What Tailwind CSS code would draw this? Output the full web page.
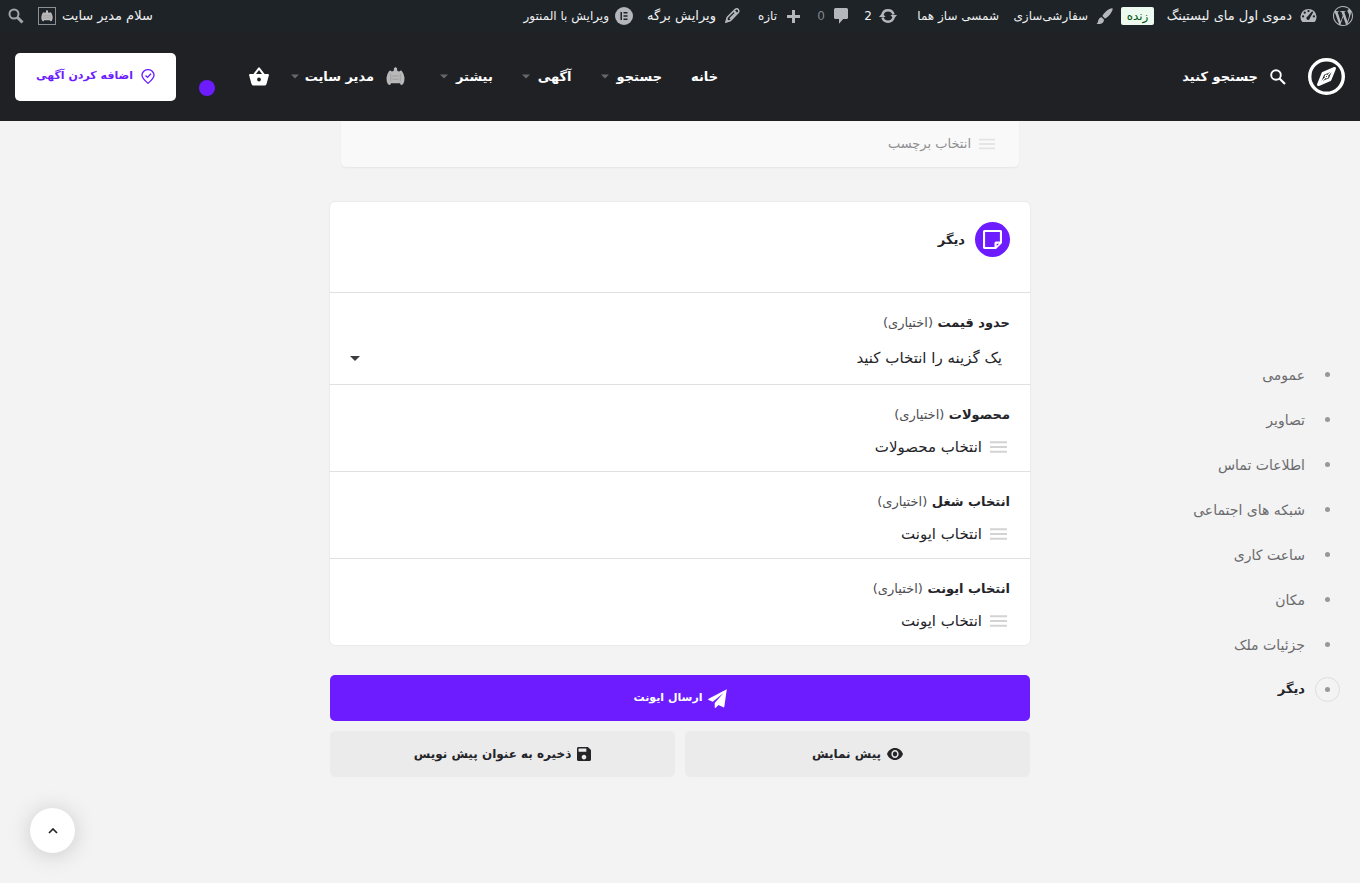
<!DOCTYPE html>
<html lang="fa" dir="rtl">
<head>
<meta charset="utf-8">
<meta name="viewport" content="width=device-width, initial-scale=1">
<title>افزودن آگهی</title>
<script src="https://cdn.jsdelivr.net/npm/@tailwindcss/browser@4"></script>
</head>
<body class="min-h-screen bg-[#f3f3f3] font-['DejaVu_Sans',sans-serif] text-[15px] text-[#242429]">

<svg class="hidden">
  <symbol id="avatar" viewBox="0 0 18 18"><path d="M9 0l1.500 1.200.200 2.500 2 .500.800-1 1.500.600 1.500 2.700 1 3.500-.200 3.500-1 2.500-1.500 1-1-.200-.400-1.300H4.600l-.400 1.300-1 .200-1.500-1-1-2.500-.200-3.500 1-3.500L3 3.800l1.500-.600.800 1 2-.500.200-2.500z" fill="#b9b9b9"/><path d="M4.500 6.500v7M13.500 6.500v7M6 8.500h6M6 11.500h6" stroke="#8c8c8c" stroke-width=".6" fill="none"/></symbol>
  <symbol id="bars" viewBox="0 0 18 12"><path d="M0 1h18M0 6h18M0 11h18" stroke="currentColor" stroke-width="2"/></symbol>
  <symbol id="caret" viewBox="0 0 10 5"><path d="M0 0h10L5 5z" fill="currentColor"/></symbol>
</svg>

<header>
  <div class="flex h-8 items-center justify-between bg-[#1d2327] pr-[7px] pl-2 text-xs whitespace-nowrap text-[#f0f0f1]">
    <nav class="flex items-center" aria-label="نوار مدیریت">
      <a href="#" aria-label="وردپرس" class="ml-4 text-[#b4b8bc]"><svg class="size-5" viewBox="0 0 24 24" fill="currentColor"><path d="M21.469 6.825c.84 1.537 1.318 3.3 1.318 5.175 0 3.979-2.156 7.456-5.363 9.325l3.295-9.527c.615-1.54.82-2.771.82-3.864 0-.405-.026-.78-.07-1.11m-7.981.105c.647-.03 1.232-.105 1.232-.105.582-.075.514-.93-.067-.899 0 0-1.755.135-2.88.135-1.064 0-2.85-.15-2.85-.15-.585-.03-.661.855-.075.885 0 0 .54.061 1.125.09l1.68 4.605-2.37 7.08L5.354 6.9c.649-.03 1.234-.1 1.234-.1.585-.075.516-.93-.065-.896 0 0-1.746.138-2.874.138-.2 0-.438-.008-.69-.015C4.911 3.15 8.235 1.215 12 1.215c2.809 0 5.365 1.072 7.286 2.833-.046-.003-.091-.009-.141-.009-1.06 0-1.812.923-1.812 1.914 0 .89.513 1.643 1.06 2.531.411.72.89 1.643.89 2.977 0 .915-.354 1.994-.821 3.479l-1.075 3.585-3.9-11.61.001.014zM12 22.784c-1.059 0-2.081-.153-3.048-.437l3.237-9.406 3.315 9.087c.024.053.05.101.078.149-1.12.393-2.325.609-3.582.609M1.211 12c0-1.564.336-3.05.935-4.39L7.29 21.709C3.694 19.96 1.212 16.271 1.211 12M12 0C5.385 0 0 5.385 0 12s5.385 12 12 12 12-5.385 12-12S18.615 0 12 0"/></svg></a>
      <a href="#" class="ml-2 flex items-center gap-2"><svg class="size-[17px]" viewBox="0 0 18 18"><path d="M2.500 16A8.500 8.500 0 1 1 15.500 16z" fill="#b4b8bc"/><g fill="#1d2327"><circle cx="9" cy="4.300" r="1.200"/><circle cx="5" cy="6" r="1.200"/><circle cx="3.300" cy="10" r="1.200"/><circle cx="14.700" cy="10" r="1.200"/><path d="M12.800 4.500l1.200 1-3.500 6.200a1.900 1.900 0 1 1-2.500-1.700z"/></g></svg><span class="w-[130px] text-[13px]">دموی اول مای لیستینگ</span></a>
      <span class="ml-2 flex h-[18px] w-[33px] items-center justify-center rounded-[2px] bg-[#edfaef] text-[#00550f]">زنده</span>
      <a href="#" class="ml-[14px] flex items-center gap-2"><svg class="size-[17px]" viewBox="0 0 18 18" fill="#b4b8bc"><path d="M17.500.500c.800.800-1.500 5.500-4.500 8.300-1.200 1.200-2.600 2.200-3.600 2.400L6.800 8.600c.300-1.200 1.500-2.800 2.900-4.200C12.500 1.800 16.700-.200 17.500.500zM6 9.700l2.400 2.500c.200 1.600-.800 3.300-2.600 4.200-1.600.800-3.800.800-5.300.300 1.300-.600 1.500-1.700 1.800-3.200.4-2 1.800-3.700 3.700-3.800z"/></svg><span class="w-[75px]">سفارشی‌سازی</span></a>
      <a href="#" class="ml-4 w-[86px]">شمسی ساز هما</a>
      <a href="#" class="ml-4 flex items-center gap-[7px]"><svg class="h-4 w-[18px]" viewBox="0 0 18 16"><path d="M3.500 6.500A5.700 5.700 0 0 1 14.500 6.500M14.500 9.500A5.700 5.700 0 0 1 3.500 9.500" fill="none" stroke="#b4b8bc" stroke-width="2.600"/><path d="M0 9L3.300 5 6.600 9zM11.400 7L14.700 11 18 7z" fill="#b4b8bc"/></svg><span class="w-2">2</span></a>
      <a href="#" class="ml-[17px] flex items-center gap-[9px]"><svg class="h-4 w-[14px]" viewBox="0 0 14 16" fill="#b4b8bc"><path d="M1.500 0h11A1.500 1.500 0 0 1 14 1.500v8a1.500 1.500 0 0 1-1.500 1.500H9.200L5 15.800V11H1.500A1.500 1.500 0 0 1 0 9.500v-8A1.500 1.500 0 0 1 1.500 0z"/></svg><span class="w-2 text-[#81858a]">0</span></a>
      <a href="#" class="ml-[17px] flex items-center gap-[10px]"><svg class="size-[13px]" viewBox="0 0 13 13"><path d="M6.500 0v13M0 6.500h13" stroke="#b4b8bc" stroke-width="3"/></svg><span class="w-5">تازه</span></a>
      <a href="#" class="ml-[14px] flex items-center gap-[9px]"><svg class="size-[15px]" viewBox="0 0 15 15"><path d="M1 14l1.200-4.500L10.500 1.200q1.600-1 2.700.300t.3 2.700L5.500 12.500z" fill="none" stroke="#b4b8bc" stroke-width="1.500"/><path d="M9 3l3 3M11 5L5 11" stroke="#b4b8bc" stroke-width="2"/><path d="M.3 14.700l1.300-4.200 3 3z" fill="#b4b8bc"/></svg><span class="w-[69px] text-[13px]">ویرایش برگه</span></a>
      <a href="#" class="flex items-center gap-[6px]"><svg class="size-[18px]" viewBox="0 0 18 18"><circle cx="9" cy="9" r="9" fill="#b4b8bc"/><path d="M6.200 5v8M8.500 5.800h4M8.500 9h4M8.500 12.200h4" stroke="#1d2327" stroke-width="1.500"/></svg><span>ویرایش با المنتور</span></a>
    </nav>
    <div class="flex items-center">
      <a href="#" class="ml-[14px] flex items-center gap-[6px]"><span class="text-[13px]">سلام مدیر سایت</span><span class="flex size-[18px] items-center justify-center border border-[#8c8f94]"><svg class="size-3"><use href="#avatar"/></svg></span></a>
      <button type="button" aria-label="جستجو"><svg class="block size-4" viewBox="0 0 16 16" fill="none" stroke="#a0a5aa"><circle cx="6" cy="6" r="4.500" stroke-width="2"/><path d="M9.500 9.500l5 5" stroke-width="3"/></svg></button>
    </div>
  </div>

  <div class="flex h-[89px] items-center justify-between bg-[#202125] px-[15px] text-[13px] font-bold whitespace-nowrap text-white">
    <div class="flex items-center">
      <a href="#" aria-label="خانه" class="ml-[22px]"><svg class="size-[37px]" viewBox="0 0 37 37" fill="none" stroke="#fff"><circle cx="18.500" cy="18.500" r="16.800" stroke-width="3.400"/><path d="M26.500 10.500L15 15.500 10.500 26.500 22 21.500z" stroke-width="3" stroke-linejoin="round"/><circle cx="18.500" cy="18.500" r="1.300" stroke-width="1.400"/><path d="M26.500 10.500l-6.500 6.500M10.500 26.500l6.500-6.500" stroke-width="1.200"/></svg></a>
      <button type="button" class="flex items-center gap-3 font-bold"><svg class="size-4" viewBox="0 0 16 16" fill="none" stroke="#fff"><circle cx="6" cy="6" r="4.800" stroke-width="1.900"/><path d="M9.500 9.500l5.500 5.500" stroke-width="2.200"/></svg><span>جستجو کنید</span></button>
    </div>
    <div class="flex items-center">
      <nav class="ml-[35px] flex items-center gap-[29px]" aria-label="منوی اصلی">
        <a href="#">خانه</a>
        <a href="#" class="flex items-center gap-2"><span>جستجو</span><svg class="h-[5px] w-2 text-[#68686c]"><use href="#caret"/></svg></a>
        <a href="#" class="flex items-center gap-2"><span>آگهی</span><svg class="h-[5px] w-2 text-[#68686c]"><use href="#caret"/></svg></a>
        <a href="#" class="flex items-center gap-2"><span>بیشتر</span><svg class="h-[5px] w-2 text-[#68686c]"><use href="#caret"/></svg></a>
      </nav>
      <a href="#" class="ml-[22px] flex items-center gap-2"><svg class="ml-1 size-[19px]"><use href="#avatar"/></svg><span class="w-[67px]">مدیر سایت</span><svg class="h-[5px] w-2 text-[#68686c]"><use href="#caret"/></svg></a>
      <a href="#" aria-label="سبد خرید" class="relative ml-[73px]"><svg class="h-[19px] w-5" viewBox="0 0 20 19" fill="#fff"><path d="M9.200.700q.8-.900 1.600 0L15.600 7H19q1.100.100.900 1.200L17.500 17q-.500 1.500-2 1.500h-11q-1.500 0-2-1.500L.100 8.200Q-.1 7.100 1 7h3.400zM10 3L7 7h6z" fill-rule="evenodd"/><circle cx="10" cy="12.500" r="1.900" fill="#202125"/></svg><span class="absolute top-[13px] -left-[50px] size-4 rounded-full bg-[#6c1cff]"></span></a>
      <a href="#" class="flex h-12 w-[161px] items-center justify-center gap-2 rounded-[5px] bg-white text-[11px] text-[#6c1cff]"><svg class="h-[15px] w-[14px]" viewBox="0 0 14 15" fill="none" stroke="currentColor" stroke-width="1.300"><path d="M7 14.300C4 11.500 1 9.300 1 6.300a6 5.700 0 0 1 12 0c0 3-3 5.200-6 8z"/><path d="M4.500 6.500L6.500 8.400 10 4.700"/></svg><span>اضافه کردن آگهی</span></a>
    </div>
  </div>
</header>

<main class="grid grid-cols-[1fr_minmax(0,700px)_1fr]">
  <nav class="pt-[231px] pr-5" aria-label="بخش‌های فرم">
    <ul class="text-sm text-[#6b6b6e]">
      <li><a href="#" class="flex h-[45px] items-center gap-[10px]"><span class="flex size-[25px] items-center justify-center"><i class="size-[5px] rounded-full bg-[#98989b]"></i></span>عمومی</a></li>
      <li><a href="#" class="flex h-[45px] items-center gap-[10px]"><span class="flex size-[25px] items-center justify-center"><i class="size-[5px] rounded-full bg-[#98989b]"></i></span>تصاویر</a></li>
      <li><a href="#" class="flex h-[45px] items-center gap-[10px]"><span class="flex size-[25px] items-center justify-center"><i class="size-[5px] rounded-full bg-[#98989b]"></i></span>اطلاعات تماس</a></li>
      <li><a href="#" class="flex h-[45px] items-center gap-[10px]"><span class="flex size-[25px] items-center justify-center"><i class="size-[5px] rounded-full bg-[#98989b]"></i></span>شبکه های اجتماعی</a></li>
      <li><a href="#" class="flex h-[45px] items-center gap-[10px]"><span class="flex size-[25px] items-center justify-center"><i class="size-[5px] rounded-full bg-[#98989b]"></i></span>ساعت کاری</a></li>
      <li><a href="#" class="flex h-[45px] items-center gap-[10px]"><span class="flex size-[25px] items-center justify-center"><i class="size-[5px] rounded-full bg-[#98989b]"></i></span>مکان</a></li>
      <li><a href="#" class="flex h-[45px] items-center gap-[10px]"><span class="flex size-[25px] items-center justify-center"><i class="size-[5px] rounded-full bg-[#98989b]"></i></span>جزئیات ملک</a></li>
      <li><a href="#" class="flex h-[45px] items-center gap-[10px] text-[13px] font-bold text-[#242429]"><span class="flex size-[25px] items-center justify-center rounded-full border border-[#dedede]"><i class="size-[5px] rounded-full bg-[#98989b]"></i></span>دیگر</a></li>
    </ul>
  </nav>

  <form>
    <section class="mx-[11px] flex h-[46px] items-center rounded-b-[5px] bg-[#f9f9f9] px-6 shadow-[0_1px_2px_rgba(0,0,0,0.06)]">
      <button type="button" class="flex items-center gap-2 text-[13px] text-[#8f8f92]"><svg class="h-3 w-4 text-[#e4e4e4]"><use href="#bars"/></svg>انتخاب برچسب</button>
    </section>

    <section class="mt-[35px] rounded-[5px] bg-white shadow-[0_0_2px_rgba(0,0,0,0.12)]">
      <div class="flex h-[90px] gap-[10px] px-5 pt-5">
        <span class="flex size-[35px] items-center justify-center rounded-full bg-[#6c1cff]"><svg class="size-[19px]" viewBox="0 0 19 19" fill="none" stroke="#fff" stroke-width="2.200"><path d="M2 1h15a1 1 0 0 1 1 1v10.500L12.500 18H2a1 1 0 0 1-1-1V2a1 1 0 0 1 1-1z"/><path d="M18 11.500h-5q-1.500 0-1.500 1.500v5h1.500L18 13z" fill="#fff" stroke="none"/><path d="M13.700 16v-2.300h2.300z" fill="#6c1cff" stroke="none"/></svg></span>
        <h2 class="h-[35px] text-[13px] leading-[35px] font-bold">دیگر</h2>
      </div>
      <div class="border-t border-[#e0e0e0] px-5 pt-5 pb-[11px]">
        <label for="price" class="block h-5 text-[13px] leading-5 font-bold">حدود قیمت <span class="font-normal text-[#4d4d52]">(اختیاری)</span></label>
        <div class="relative mt-[10px]">
          <select id="price" class="block h-[30px] w-full appearance-none bg-transparent pr-2"><option>یک گزینه را انتخاب کنید</option></select>
          <svg class="pointer-events-none absolute top-[13px] left-0 h-[5px] w-[10px] text-[#3c3c40]"><use href="#caret"/></svg>
        </div>
      </div>
      <div class="border-t border-[#e0e0e0] px-5 pt-5 pb-3">
        <label for="products" class="block h-5 text-[13px] leading-5 font-bold">محصولات <span class="font-normal text-[#4d4d52]">(اختیاری)</span></label>
        <button id="products" type="button" class="mt-[10px] mr-[3px] flex h-6 items-center gap-2"><svg class="h-3 w-[17px] text-[#d3d3d3]"><use href="#bars"/></svg>انتخاب محصولات</button>
      </div>
      <div class="border-t border-[#e0e0e0] px-5 pt-5 pb-3">
        <label for="job" class="block h-5 text-[13px] leading-5 font-bold">انتخاب شغل <span class="font-normal text-[#4d4d52]">(اختیاری)</span></label>
        <button id="job" type="button" class="mt-[10px] mr-[3px] flex h-6 items-center gap-2"><svg class="h-3 w-[17px] text-[#d3d3d3]"><use href="#bars"/></svg>انتخاب ایونت</button>
      </div>
      <div class="border-t border-[#e0e0e0] px-5 pt-5 pb-3">
        <label for="event" class="block h-5 text-[13px] leading-5 font-bold">انتخاب ایونت <span class="font-normal text-[#4d4d52]">(اختیاری)</span></label>
        <button id="event" type="button" class="mt-[10px] mr-[3px] flex h-6 items-center gap-2"><svg class="h-3 w-[17px] text-[#d3d3d3]"><use href="#bars"/></svg>انتخاب ایونت</button>
      </div>
    </section>

    <div class="mt-[30px] grid grid-cols-2 gap-[10px] text-xs">
      <button type="submit" class="col-span-2 flex h-[46px] items-center justify-center gap-[5px] rounded-[5px] bg-[#6c1cff] text-[11px] font-bold text-white"><svg class="size-[19px]" viewBox="0 0 19 19" fill="#fff"><path d="M18.800.200L16.300 17.700q-.2.900-1 .600L10.500 16l-2.800 2.800q-.8.500-1-.500V14L15.500 4 4.800 12.800.600 11q-1-.600 0-1.300z"/></svg>ارسال ایونت</button>
      <button type="button" class="flex h-[46px] items-center justify-center gap-[6px] rounded-[5px] bg-[#ebebeb] font-bold"><svg class="h-3 w-4" viewBox="1 4.500 22 15" preserveAspectRatio="none" fill="currentColor"><path d="M12 4.500C7 4.500 2.730 7.610 1 12c1.730 4.390 6 7.500 11 7.500s9.270-3.110 11-7.500c-1.730-4.390-6-7.500-11-7.500zM12 17c-2.760 0-5-2.240-5-5s2.240-5 5-5 5 2.240 5 5-2.240 5-5 5zm0-8c-1.660 0-3 1.340-3 3s1.340 3 3 3 3-1.340 3-3-1.340-3-3-3z"/></svg>پیش نمایش</button>
      <button type="button" class="flex h-[46px] items-center justify-center gap-[6px] rounded-[5px] bg-[#ebebeb] font-bold"><svg class="size-[14px]" viewBox="3 3 18 18" fill="currentColor"><path d="M17 3H5c-1.110 0-2 .9-2 2v14c0 1.100.89 2 2 2h14c1.100 0 2-.9 2-2V7l-4-4zm-5 16c-1.660 0-3-1.340-3-3s1.340-3 3-3 3 1.340 3 3-1.340 3-3 3zm3-10H5V5h10v4z"/></svg>ذخیره به عنوان پیش نویس</button>
    </div>
  </form>
</main>

<button type="button" aria-label="بازگشت به بالا" class="fixed bottom-[30px] left-[30px] flex size-[45px] items-center justify-center rounded-full bg-white shadow-[0_2px_22px_rgba(0,0,0,0.17)]"><svg class="h-[6px] w-[10px]" viewBox="0 0 10 6" fill="none" stroke="#242429" stroke-width="1.700"><path d="M1 5l4-4 4 4"/></svg></button>
</body>
</html>
